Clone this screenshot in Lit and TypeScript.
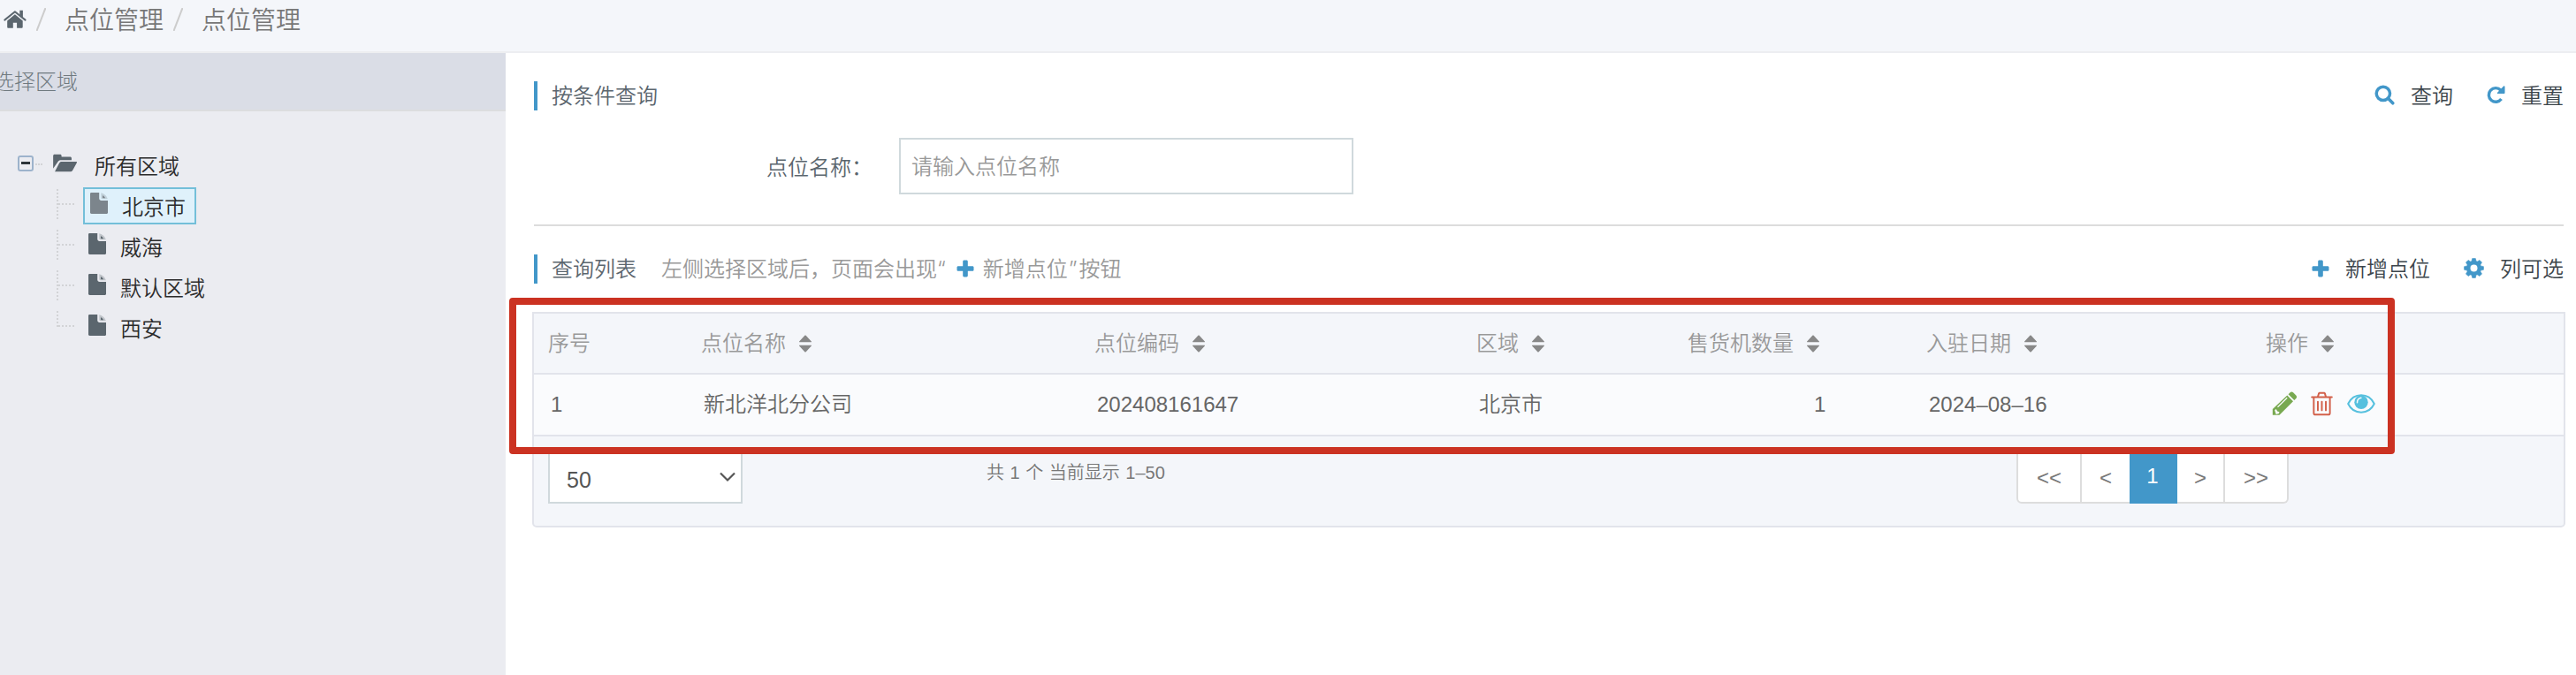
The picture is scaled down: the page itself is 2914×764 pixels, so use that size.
import { css, html, LitElement, nothing, svg } from "lit";
import { customElement, property, state } from "lit/decorators.js";
import { classMap } from "lit/directives/class-map.js";

// every icon carries its own view box, in the size it is normally shown
const icons = {
  home: {
    box: "0 0 26 22",
    body: svg`
      <path d="M12.900 5.200 4.200 12.600v7.200c0 .5.400.9.900.9h5.700v-5.900h4.300v5.900h5.700c.5 0 .9-.4.9-.9v-7.200z" />
      <path d="M1.300 11.600 12.900 2.200l11.700 9.400" fill="none" stroke="currentColor" stroke-width="2" stroke-linecap="round" stroke-linejoin="round" />
      <path d="M18.300.8h3.600v8l-3.600-2.900z" />`,
  },
  folder: {
    box: "0 0 30 22",
    body: svg`
      <path d="M1 17.500V2.500C1 1.500 1.700.8 2.700.8h6.600c1 0 1.600.7 1.600 1.600v1.200h10.200c1 0 1.700.7 1.700 1.700v2.400H10.200c-1.500 0-2.800.7-3.700 1.900z" />
      <path d="M3 21.200 8.300 11c.5-1 1.500-1.600 2.600-1.600h17.300c.8 0 1.200.6.8 1.300l-4.900 8.900c-.5 1-1.500 1.600-2.600 1.600z" />`,
  },
  file: {
    box: "0 0 20 24",
    body: svg`
      <path d="M1.500 0H10.200V6.600c0 1.500 1 2.500 2.500 2.500H20V22.800c0 .7-.5 1.200-1.200 1.200H1.500C.7 24 0 23.500 0 22.800V1.200C0 .5.700 0 1.500 0z" />
      <path d="M12.300.3c3.700.8 6.500 3.300 7.500 7H13.500c-.7 0-1.200-.5-1.200-1.200z" opacity=".3" />
      <path d="M14 3.300c1.500.5 2.500 1.500 3 3h-2.300c-.4 0-.7-.3-.7-.7z" />`,
  },
  search: {
    box: "0 0 24 24",
    body: svg`<g fill="none" stroke="currentColor">
      <circle cx="10.300" cy="10.300" r="8" stroke-width="3.600" />
      <path d="m16 16 5.700 5.700" stroke-width="3.800" stroke-linecap="round" /></g>`,
  },
  redo: {
    box: "0 0 22 22",
    body: svg`
      <path d="M17.300 15.800A8.200 8.200 0 1 1 16.600 5.300" fill="none" stroke="currentColor" stroke-width="3.600" />
      <path d="M21.500 1.200v7.400c0 .5-.4.9-.9.9h-7.300c-.8 0-1.200-1-.6-1.500L20 .6c.6-.5 1.500-.2 1.500.6z" />`,
  },
  plus: {
    box: "0 0 20 20",
    body: svg`<path d="M8.600.5h2.800c.8 0 1.400.6 1.400 1.400v5.300h5.300c.8 0 1.400.6 1.400 1.400v2.800c0 .8-.6 1.400-1.400 1.400h-5.300v5.300c0 .8-.6 1.400-1.400 1.400H8.600c-.8 0-1.400-.6-1.400-1.400v-5.300H1.900c-.8 0-1.400-.6-1.400-1.400V8.600c0-.8.6-1.400 1.400-1.400h5.300V1.900c0-.8.6-1.400 1.400-1.400z" />`,
  },
  gear: {
    box: "-12 -12 24 24",
    body: svg`
      <circle r="6.500" fill="none" stroke="currentColor" stroke-width="4.600" />
      ${[0, 45, 90, 135, 180, 225, 270, 315].map(
        (angle) => svg`<path d="M-2.700-8 -1.900-11.400h3.800l.8 3.400z" stroke="currentColor" stroke-width=".6" stroke-linejoin="round" transform="rotate(${angle})" />`,
      )}`,
  },
  sort: {
    box: "0 0 14 20",
    body: svg`<path d="M.3 8.200h13.400c.3 0 .4-.4.2-.6L7.700.7c-.4-.4-1-.4-1.400 0L.1 7.600c-.2.200-.1.600.2.600zM.3 11.800h13.400c.3 0 .4.4.2.6l-6.200 6.900c-.4.4-1 .4-1.400 0L.1 12.400c-.2-.2-.1-.6.2-.6z" />`,
  },
  pencil: {
    box: "0 0 28 28",
    body: svg`
      <path d="M17.300 4.500 24 11.200 8.500 26.700H.8V20z" />
      <path d="m18.600 3.200 2-2c1-1 2.500-1 3.500 0l3.200 3.200c1 1 1 2.500 0 3.500l-2 2z" />
      <path d="M6.500 17.800 17.200 7.300" fill="none" stroke="#fafbfd" stroke-width="1.200" />
      <path d="m3.200 21.300 1.600-1.200 1.300 2.300 2.400.9-.6 1.800-3.200 1z" fill="#fafbfd" />`,
  },
  trash: {
    box: "0 0 26 28",
    body: svg`<g fill="none" stroke="currentColor" stroke-width="2" stroke-linecap="round" stroke-linejoin="round">
      <path d="M1.200 6.200h23.600M8.300 5.500l1.200-3.600c.1-.4.400-.6.800-.6h5.400c.4 0 .7.2.8.6l1.200 3.600" />
      <path d="M3.500 7v17.800c0 1.100.9 2 2 2h15c1.100 0 2-.9 2-2V7M8.300 11.500v10.200M13 11.500v10.200M17.700 11.500v10.200" /></g>`,
  },
  eye: {
    box: "0 0 32 22",
    body: svg`
      <path d="M1.200 11C4.200 4.800 9.800 1.300 16 1.300S27.800 4.800 30.800 11C27.800 17.200 22.200 20.700 16 20.700S4.200 17.200 1.200 11z" fill="none" stroke="currentColor" stroke-width="2" stroke-linejoin="round" />
      <circle cx="16" cy="9.200" r="7.700" />
      <path d="M11.500 9.700c0-3 1.600-5 4.400-5.400" fill="none" stroke="#fafbfd" stroke-width="1.500" stroke-linecap="round" />`,
  },
  chevron: {
    box: "0 0 18 12",
    body: svg`<path d="m1 1.500 8 8 8-8" fill="none" stroke="currentColor" stroke-width="2.200" />`,
  },
};

type IconName = keyof typeof icons;

@customElement("app-icon")
class AppIcon extends LitElement {
  @property() name: IconName = "home";

  static override styles = css`
    :host {
      display: block;
      flex: none;
    }
    svg {
      display: block;
      width: 100%;
      height: 100%;
      fill: currentColor;
      overflow: visible;
    }
  `;

  override render() {
    const icon = icons[this.name];
    return html`<svg viewBox=${icon.box}>${icon.body}</svg>`;
  }
}

@customElement("region-tree")
class RegionTree extends LitElement {
  @state() private selected = "北京市";
  private regions = ["北京市", "威海", "默认区域", "西安"];

  static override styles = css`
    :host {
      display: block;
      padding: 48px 0 0 20px;
      color: #2b2b2b;
    }
    .parent {
      display: flex;
      align-items: center;
      height: 24px;
    }
    .parent-label {
      padding-top: 5px;
    }
    .toggle {
      box-sizing: border-box;
      width: 18px;
      height: 18px;
      padding: 5px 2px;
      border: 2px solid #9db3cc;
      border-radius: 3px;
      margin-top: -2px;
    }
    .toggle::after {
      content: "";
      display: block;
      height: 3px;
      background: #2b3338;
    }
    .stub {
      width: 8px;
      margin: 0 12px 0 2px;
      border-top: 2px dotted #d2d3d6;
    }
    .folder {
      width: 29px;
      height: 21px;
      margin: -4px 19px 0 -1px;
      color: #5b666e;
    }
    .child {
      display: flex;
      align-items: flex-start;
      height: 42px;
      padding: 0 0 4px 44px;
    }
    .children {
      padding-top: 14px;
    }
    .branch {
      width: 18px;
      height: 34px;
      margin: 2px 10px 0 0;
      border-left: 2px dotted #d2d3d6;
    }
    .branch::after {
      content: "";
      display: block;
      margin-top: 16px;
      border-top: 2px dotted #d2d3d6;
    }
    .child:last-child .branch {
      height: 18px;
    }
    .leaf {
      box-sizing: border-box;
      display: flex;
      height: 42px;
      padding: 6px 12px 0 6px;
      line-height: 36px;
    }
    .leaf.selected {
      padding: 4px 10px 0 6px;
      border: 2px solid #73bfd9;
      background: #dff1fb;
    }
    .file {
      width: 20px;
      height: 24px;
      margin-right: 16px;
      color: #5b666e;
    }
    .selected .file {
      color: #7c858c;
    }
    .label {
      margin-top: -1px;
    }
  `;

  override render() {
    return html`
      <div class="parent">
        <span class="toggle"></span><span class="stub"></span>
        <app-icon class="folder" name="folder"></app-icon>
        <span class="parent-label">所有区域</span>
      </div>
      <div class="children">
        ${this.regions.map(
          (region) => html`
            <div class="child" @click=${() => (this.selected = region)}>
              <span class="branch"></span>
              <div class=${classMap({ leaf: true, selected: region === this.selected })}>
                <app-icon class="file" name="file"></app-icon>
                <span class="label">${region}</span>
              </div>
            </div>
          `,
        )}
      </div>
    `;
  }
}

@customElement("app-root")
class AppRoot extends LitElement {
  private columns = ["序号", "点位名称", "点位编码", "区域", "售货机数量", "入驻日期", "操作"];
  private rows = [["1", "新北洋北分公司", "202408161647", "北京市", "1", "2024–08–16"]];
  private pages = ["<<", "<", "1", ">", ">>"];

  static override styles = css`
    :host {
      display: flex;
      flex-direction: column;
      height: 764px;
      overflow: hidden;
      background: #fff;
      color: #5b666e;
      font: 350 24px/36px "Liberation Sans", "Noto Sans CJK SC", sans-serif;
      white-space: nowrap;
    }
    .crumbs {
      box-sizing: border-box;
      display: flex;
      align-items: center;
      height: 60px;
      padding: 0 0 14px 4px;
      border-bottom: 2px solid #edeef1;
      background: #f4f6fa;
      color: #777;
      font-size: 28px;
    }
    .crumbs span {
      padding-top: 3px;
    }
    .home {
      width: 26px;
      height: 22px;
      color: #5b666e;
    }
    .slash {
      width: 11px;
      height: 26px;
      margin: -1px 21px 0 11px;
      stroke: #ccc;
      stroke-width: 2;
    }
    .body {
      display: flex;
      flex: 1;
      min-height: 0;
    }
    .sidebar {
      width: 572px;
      background: #ebecf1;
    }
    .sidebar-title {
      box-sizing: border-box;
      height: 66px;
      padding-top: 15px;
      border-bottom: 2px solid #dcdddf;
      background: #dadde6;
      color: #6f797f;
      font-weight: 300;
      text-indent: -8px;
    }
    .main {
      position: relative;
      box-sizing: border-box;
      width: 2342px;
      padding: 32px 12px 0 30px;
    }
    .bar {
      display: flex;
      align-items: center;
      height: 33px;
      padding: 0 2px;
    }
    .title {
      box-sizing: border-box;
      height: 33px;
      padding-left: 16px;
      border-left: 4px solid #4297c9;
      line-height: 34px;
    }
    .hint {
      display: flex;
      align-items: center;
      margin-left: 28px;
      color: #999;
      line-height: 34px;
    }
    .quote {
      font-family: Inter, sans-serif;
    }
    .hint .plus {
      margin: -2px 10px 0 12px;
    }
    .quote.close {
      margin: 0 2px 0 1px;
    }
    .actions {
      display: flex;
      margin-left: auto;
      color: #3c454b;
      line-height: 34px;
    }
    .action {
      display: flex;
      align-items: center;
      margin-left: 38px;
    }
    .action app-icon {
      margin: -2px 18px 0 0;
    }
    .search,
    .gear {
      width: 23px;
      height: 23px;
      color: #4297c9;
    }
    .redo {
      width: 21px;
      height: 21px;
      color: #4297c9;
    }
    .plus {
      width: 20px;
      height: 20px;
      color: #4297c9;
    }
    .form {
      display: flex;
      align-items: center;
      height: 64px;
      margin: 31px 0 34px;
      padding-left: 265px;
    }
    .form label {
      width: 150px;
      padding-top: 3px;
    }
    .form input {
      box-sizing: border-box;
      width: 514px;
      height: 64px;
      padding: 1px 12px 0;
      border: 2px solid #d0d9dc;
      border-radius: 0;
      outline: 0;
      font: inherit;
    }
    .form input::placeholder {
      color: #999;
    }
    hr {
      height: 2px;
      margin: 0 2px 32px;
      border: 0;
      background: #dcdcdc;
    }
    .table {
      box-sizing: border-box;
      height: 244px;
      margin-top: 32px;
      border: 2px solid #e2e4eb;
      border-radius: 0 0 5px 5px;
      background: #f4f6fa;
    }
    .row {
      box-sizing: border-box;
      display: grid;
      grid-template-columns: 173px 445px 432px 239px 270px 384px 1fr;
      align-items: center;
      height: 70px;
      padding: 0 0 1px 19px;
      border-bottom: 2px solid #e2e4eb;
      background: #fafbfd;
      color: #666;
    }
    .row.head {
      height: 69px;
      padding: 1px 0 0 16px;
      background: none;
      color: #999;
    }
    .cell {
      display: flex;
      align-items: center;
    }
    .cell:nth-child(5):not(.head .cell) {
      padding-left: 140px;
    }
    .sort {
      width: 14px;
      height: 20px;
      margin: -1px 0 0 15px;
      color: #888;
    }
    .tools {
      display: flex;
      align-items: center;
      margin-top: -1px;
      padding-left: 4px;
    }
    .pencil {
      width: 28px;
      height: 28px;
      color: #78a951;
    }
    .trash {
      width: 25px;
      height: 28px;
      margin: 0 16px;
      color: #d2604a;
    }
    .eye {
      width: 32px;
      height: 22px;
      color: #56c0de;
    }
    .footer {
      display: flex;
      padding: 12px 16px 0;
    }
    .size {
      box-sizing: border-box;
      display: flex;
      align-items: center;
      justify-content: space-between;
      width: 220px;
      height: 64px;
      padding: 10px 6px 0 19px;
      border: 2px solid #d0d9dc;
      background: #fff;
      color: #555;
      font-size: 25px;
    }
    .chevron {
      width: 18px;
      height: 12px;
      margin-top: -7px;
    }
    .summary {
      width: 1165px;
      padding: 11px 0 0 276px;
      color: #777;
      font-size: 20px;
      word-spacing: 1px;
    }
    .pager {
      display: flex;
      width: 308px;
      height: 64px;
      color: #777;
    }
    .page {
      box-sizing: border-box;
      flex: 1 1 54px;
      padding-top: 15px;
      border: 2px solid #ddd;
      border-left-width: 0;
      background: #fff;
      text-align: center;
    }
    .page:first-child {
      flex-basis: 74px;
      border-left-width: 2px;
      border-radius: 6px 0 0 6px;
    }
    .page:last-child {
      flex-basis: 72px;
      border-radius: 0 6px 6px 0;
    }
    .page:nth-child(2) {
      border-right-width: 0;
    }
    .page.current {
      padding-top: 13px;
      border-color: #4297c9;
      background: #4297c9;
      color: #fff;
    }
    .marker {
      position: absolute;
      top: 277px;
      left: 4px;
      box-sizing: border-box;
      width: 2133px;
      height: 177px;
      border: 8px solid #cb3222;
      border-radius: 4px;
      pointer-events: none;
    }
  `;

  private renderCrumb(text: string) {
    return html`<svg class="slash" viewBox="0 0 11 26"><path d="M10.500 0 .5 26" /></svg><span>${text}</span>`;
  }

  private renderAction(icon: IconName, text: string) {
    return html`<div class="action"><app-icon class=${icon} name=${icon}></app-icon><span>${text}</span></div>`;
  }

  override render() {
    return html`
      <nav class="crumbs">
        <app-icon class="home" name="home"></app-icon>
        ${this.renderCrumb("点位管理")} ${this.renderCrumb("点位管理")}
      </nav>
      <div class="body">
        <aside class="sidebar">
          <div class="sidebar-title">选择区域</div>
          <region-tree></region-tree>
        </aside>
        <main class="main">
          <div class="bar">
            <div class="title">按条件查询</div>
            <div class="actions">${this.renderAction("search", "查询")} ${this.renderAction("redo", "重置")}</div>
          </div>
          <div class="form">
            <label for="name">点位名称：</label>
            <input id="name" placeholder="请输入点位名称" />
          </div>
          <hr />
          <div class="bar">
            <div class="title">查询列表</div>
            <div class="hint">
              <span>左侧选择区域后，页面会出现<span class="quote">“</span></span>
              <app-icon class="plus" name="plus"></app-icon>
              <span>新增点位<span class="quote close">”</span>按钮</span>
            </div>
            <div class="actions">${this.renderAction("plus", "新增点位")} ${this.renderAction("gear", "列可选")}</div>
          </div>
          <div class="table">
            <div class="row head">
              ${this.columns.map(
                (column, i) => html`
                  <div class="cell">
                    ${column}${i > 0 ? html`<app-icon class="sort" name="sort"></app-icon>` : nothing}
                  </div>
                `,
              )}
            </div>
            ${this.rows.map(
              (row) => html`
                <div class="row">
                  ${row.map((value) => html`<div class="cell">${value}</div>`)}
                  <div class="tools">
                    <app-icon class="pencil" name="pencil"></app-icon>
                    <app-icon class="trash" name="trash"></app-icon>
                    <app-icon class="eye" name="eye"></app-icon>
                  </div>
                </div>
              `,
            )}
            <div class="footer">
              <div class="size">50 <app-icon class="chevron" name="chevron"></app-icon></div>
              <div class="summary">共 1 个 当前显示 1–50</div>
              <div class="pager">
                ${this.pages.map(
                  (page) => html`<div class=${classMap({ page: true, current: page === "1" })}>${page}</div>`,
                )}
              </div>
            </div>
          </div>
          <div class="marker"></div>
        </main>
      </div>
    `;
  }
}
